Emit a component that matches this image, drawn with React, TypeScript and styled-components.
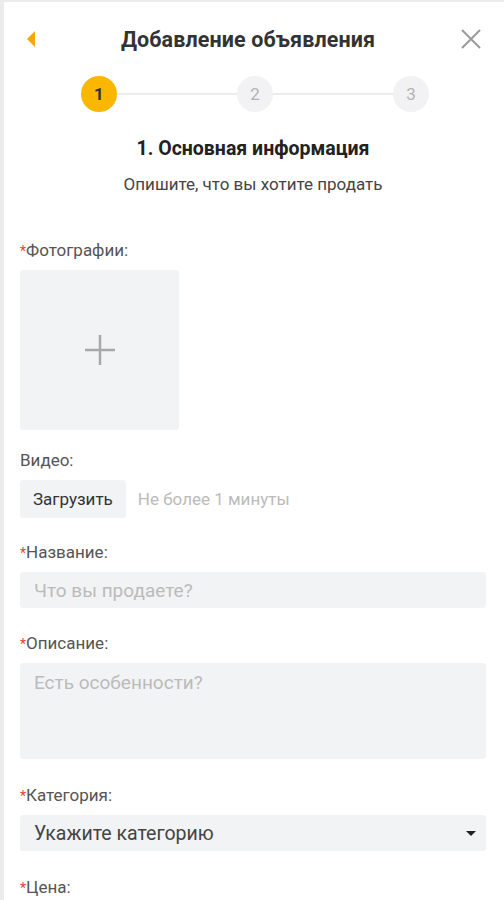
import React from 'react';
import styled, { createGlobalStyle } from 'styled-components';

const GlobalStyle = createGlobalStyle`
  html, body {
    margin: 0;
    padding: 0;
    background: #ebebeb;
  }
  body {
    font-family: Roboto, "Noto Sans", Arial, sans-serif;
    color: #333;
  }
  * { box-sizing: border-box; }
`;

const Frame = styled.div`
  margin: 2px 0 0 4px;
  min-height: 898px;
  background: #fff;
  padding: 0 18px 0 16px;
`;

const Header = styled.div`
  display: grid;
  grid-template-columns: 40px 1fr 54px;
  align-items: center;
  height: 74px;
  margin: 0 -18px 0 -16px;
  padding: 0 21px 0 23px;
`;

const BackButton = styled.button`
  width: 12px;
  height: 20px;
  padding: 0;
  border: none;
  background: none;
  cursor: pointer;
  display: flex;
  align-items: center;
`;

const Title = styled.h1`
  margin: 0;
  text-align: center;
  font-size: 21.5px;
  font-weight: 700;
  color: #333;
  letter-spacing: 0.1px;
`;

const CloseButton = styled.button`
  justify-self: end;
  width: 24px;
  height: 24px;
  padding: 0;
  border: none;
  background: none;
  cursor: pointer;
  display: flex;
  align-items: center;
  justify-content: center;
`;

const Stepper = styled.div`
  display: flex;
  align-items: center;
  justify-content: center;
  height: 36px;
  margin-left: 4px;
`;

const StepDot = styled.div<{ active?: boolean }>`
  width: 36px;
  height: 36px;
  border-radius: 50%;
  display: flex;
  align-items: center;
  justify-content: center;
  font-size: 17px;
  font-weight: ${p => (p.active ? 700 : 400)};
  color: ${p => (p.active ? '#333' : '#b3b3b3')};
  background: ${p => (p.active ? '#fbb700' : '#f2f2f4')};
`;

const StepLine = styled.div`
  width: 120px;
  height: 2px;
  background: #ececec;
`;

const StepTitle = styled.h2`
  margin: 25px 0 0;
  text-align: center;
  font-size: 19.5px;
  font-weight: 700;
  line-height: 24px;
  color: #222;
`;

const StepHint = styled.p`
  margin: 13px 0 0;
  text-align: center;
  font-size: 17px;
  line-height: 20px;
  color: #444;
`;

const Field = styled.div<{ gap: number }>`
  margin-top: ${p => p.gap}px;
  display: flex;
  flex-direction: column;
  align-items: flex-start;
`;

const Label = styled.label<{ required?: boolean }>`
  display: block;
  height: 22px;
  font-size: 17px;
  line-height: 22px;
  color: #555;
  margin-bottom: 9px;

  &::before {
    content: ${p => (p.required ? "'*'" : "''")};
    color: #f04134;
    font-size: 14px;
    line-height: 1;
  }
`;

const PhotoBox = styled.div`
  width: 159px;
  height: 160px;
  background: #f2f3f5;
  border-radius: 3px;
  display: flex;
  align-items: center;
  justify-content: center;
  cursor: pointer;
`;

const UploadRow = styled.div`
  display: flex;
  align-items: center;
  gap: 12px;
  height: 38px;
`;

const UploadButton = styled.button`
  height: 38px;
  padding: 0 13px;
  border: none;
  border-radius: 3px;
  background: #f2f3f5;
  font-family: inherit;
  font-size: 17px;
  color: #333;
  cursor: pointer;
`;

const Note = styled.span`
  font-size: 17px;
  color: #bbb;
`;

const Input = styled.input`
  width: 100%;
  height: 36px;
  border: none;
  border-radius: 3px;
  background: #f2f3f5;
  padding: 0 14px;
  font-family: inherit;
  font-size: 19px;
  color: #333;
  outline: none;

  &::placeholder { color: #bbb; }
`;

const TextArea = styled.textarea`
  display: block;
  width: 100%;
  height: 96px;
  border: none;
  border-radius: 3px;
  background: #f2f3f5;
  padding: 9px 14px;
  font-family: inherit;
  font-size: 19px;
  line-height: 22px;
  color: #333;
  resize: none;
  outline: none;

  &::placeholder { color: #bbb; }
`;

const Select = styled.div`
  width: 100%;
  height: 36px;
  border-radius: 3px;
  background: #f2f3f5;
  padding: 0 10px 0 14px;
  display: flex;
  align-items: center;
  justify-content: space-between;
  font-size: 19.5px;
  color: #444;
  cursor: pointer;
`;

const Caret = styled.span`
  width: 0;
  height: 0;
  border-left: 5px solid transparent;
  border-right: 5px solid transparent;
  border-top: 5px solid #222;
`;

export default function App() {
  return (
    <>
      <GlobalStyle />
      <Frame>
        <Header>
          <BackButton aria-label="Назад">
            <svg width="8" height="16" viewBox="0 0 8 16">
              <path d="M8 0 L0 8 L8 16 Z" fill="#f7a800" />
            </svg>
          </BackButton>
          <Title>Добавление объявления</Title>
          <CloseButton aria-label="Закрыть">
            <svg width="20" height="20" viewBox="0 0 20 20">
              <path d="M1 1 L19 19 M19 1 L1 19" stroke="#9a9a9a" strokeWidth="2" />
            </svg>
          </CloseButton>
        </Header>

        <Stepper>
          <StepDot active>1</StepDot>
          <StepLine />
          <StepDot>2</StepDot>
          <StepLine />
          <StepDot>3</StepDot>
        </Stepper>

        <StepTitle>1. Основная информация</StepTitle>
        <StepHint>Опишите, что вы хотите продать</StepHint>

        <Field gap={45}>
          <Label required>Фотографии:</Label>
          <PhotoBox>
            <svg width="32" height="32" viewBox="0 0 32 32">
              <path d="M16 1 V31 M1 16 H31" stroke="#a8a8a8" strokeWidth="2.5" />
            </svg>
          </PhotoBox>
        </Field>

        <Field gap={19}>
          <Label>Видео:</Label>
          <UploadRow>
            <UploadButton>Загрузить</UploadButton>
            <Note>Не более 1 минуты</Note>
          </UploadRow>
        </Field>

        <Field gap={23}>
          <Label required>Название:</Label>
          <Input placeholder="Что вы продаете?" />
        </Field>

        <Field gap={24}>
          <Label required>Описание:</Label>
          <TextArea placeholder="Есть особенности?" />
        </Field>

        <Field gap={25}>
          <Label required>Категория:</Label>
          <Select>
            Укажите категорию
            <Caret />
          </Select>
        </Field>

        <Field gap={25}>
          <Label required>Цена:</Label>
        </Field>
      </Frame>
    </>
  );
}
